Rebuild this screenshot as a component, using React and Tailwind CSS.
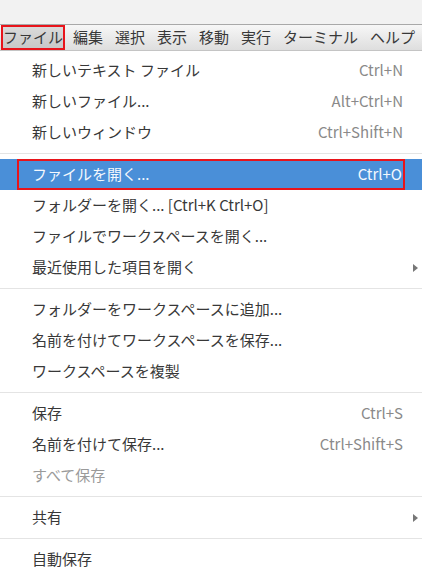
const bar = ["ファイル", "編集", "選択", "表示", "移動", "実行", "ターミナル", "ヘルプ"];

const groups = [
  [
    { label: "新しいテキスト ファイル", key: "Ctrl+N" },
    { label: "新しいファイル...", key: "Alt+Ctrl+N" },
    { label: "新しいウィンドウ", key: "Ctrl+Shift+N" },
  ],
  [
    { label: "ファイルを開く...", key: "Ctrl+O", active: true },
    { label: "フォルダーを開く... [Ctrl+K Ctrl+O]" },
    { label: "ファイルでワークスペースを開く..." },
    { label: "最近使用した項目を開く", sub: true },
  ],
  [
    { label: "フォルダーをワークスペースに追加..." },
    { label: "名前を付けてワークスペースを保存..." },
    { label: "ワークスペースを複製" },
  ],
  [
    { label: "保存", key: "Ctrl+S" },
    { label: "名前を付けて保存...", key: "Ctrl+Shift+S" },
    { label: "すべて保存", disabled: true },
  ],
  [{ label: "共有", sub: true }],
  [{ label: "自動保存" }],
];

function Item({ item }) {
  if (item.active) {
    return (
      <div className="h-[31px] bg-[#4a8fd8] pl-[17px] pr-[17px]">
        <div className="h-full flex items-center justify-between border-2 border-[#e8141b] pl-[13px] pr-[1px] text-[#f4f8fd]">
          <span>{item.label}</span>
          <span>{item.key}</span>
        </div>
      </div>
    );
  }
  return (
    <div className="relative h-[31px] flex items-center justify-between pl-[32px] pr-[19px]">
      <span className={item.disabled ? "text-[#9a9a9a]" : "text-[#383838]"}>{item.label}</span>
      {item.key && <span className="text-[#8a8a8a]">{item.key}</span>}
      {item.sub && (
        <span className="absolute right-[4px] top-1/2 -translate-y-1/2 w-0 h-0 border-y-[4px] border-y-transparent border-l-[5px] border-l-[#777777]" />
      )}
    </div>
  );
}

export default function App() {
  return (
    <div
      className="w-[422px] h-[579px] overflow-hidden bg-white text-[15px]"
      style={{ fontFamily: '"Noto Sans CJK JP", "Noto Sans", sans-serif' }}
    >
      <div className="h-[25px] bg-[#f2f2f2] border-b border-[#a9a9a9]" />
      <div className="h-[26px] flex items-stretch bg-gradient-to-b from-[#f7f7f7] to-[#dedede] border-b border-[#c4c4c4] text-[#383838]">
        {bar.map((b, i) =>
          i === 0 ? (
            <div
              key={b}
              className="ml-[1px] mr-[2px] w-[64px] flex items-center justify-center border-2 border-[#e8141b] bg-gradient-to-b from-[#dadada] to-[#c8c8c8]"
            >
              {b}
            </div>
          ) : (
            <div key={b} className="flex items-center px-[6px]">
              {b}
            </div>
          )
        )}
      </div>
      <div className="pt-[4px]">
        {groups.map((g, gi) => (
          <div key={gi}>
            {gi > 0 && <div className="my-[5px] h-px bg-[#e4e4e4]" />}
            {g.map((it) => (
              <Item key={it.label} item={it} />
            ))}
          </div>
        ))}
      </div>
    </div>
  );
}
